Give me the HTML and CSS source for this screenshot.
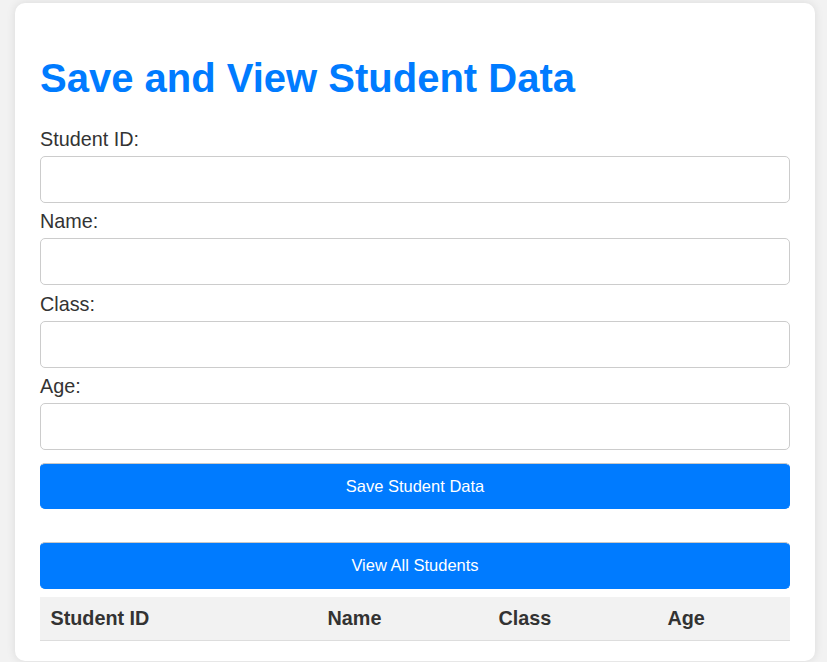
FILE: index.html
```html
<!DOCTYPE html>
<html lang="en">
<head>
<meta charset="utf-8">
<title>Save and View Student Data</title>
<link rel="stylesheet" href="styles.css">
</head>
<body>
<div class="card">
  <h1 class="title">Save and View Student Data</h1>
  <form class="form">
    <label class="label" for="sid">Student ID:</label>
    <input class="field" id="sid" type="text">
    <label class="label" for="name">Name:</label>
    <input class="field" id="name" type="text">
    <label class="label" for="cls">Class:</label>
    <input class="field" id="cls" type="text">
    <label class="label" for="age">Age:</label>
    <input class="field" id="age" type="text">
    <button class="btn btn-save" type="button">Save Student Data</button>
  </form>
  <button class="btn btn-view" type="button">View All Students</button>
  <table class="table">
    <thead>
      <tr>
        <th class="col-id">Student ID</th>
        <th class="col-name">Name</th>
        <th class="col-class">Class</th>
        <th class="col-age">Age</th>
      </tr>
    </thead>
    <tbody></tbody>
  </table>
</div>
</body>
</html>
```
FILE: styles.css
```css
* { box-sizing: border-box; }
html, body { height: 100%; }
body {
  margin: 0;
  padding: 3px 12px 0 15px;
  background: #f2f2f2;
  font-family: "Liberation Sans", Arial, sans-serif;
  color: #333;
  overflow: hidden;
}
.card {
  width: 800px;
  background: #fff;
  border-radius: 10px;
  box-shadow: 0 0 10px rgba(0, 0, 0, 0.1);
  padding: 25px 25px 20px;
}
.title {
  margin: 26.8px 0;
  font-size: 40px;
  line-height: 46px;
  font-weight: bold;
  color: #007bff;
}
.form { display: flex; flex-direction: column; margin: 0; }
.label {
  display: block;
  font-size: 19.8px;
  line-height: 23px;
  color: #333;
}
.field {
  display: block;
  width: 100%;
  height: 47px;
  margin: 5px 0 7.6px;
  padding: 10px;
  border: 1px solid #ccc;
  border-radius: 5px;
  font-size: 16px;
  font-family: inherit;
  background: #fff;
}
.btn {
  display: block;
  width: 100%;
  height: 46px;
  border: 1px solid #007bff;
  border-top-color: #c8c8c8;
  border-radius: 5px;
  background: #007bff;
  color: #fff;
  font-family: inherit;
  font-size: 16.5px;
  cursor: pointer;
}
.btn-save { margin-top: 5.5px; }
.btn-view { margin-top: 33px; height: 46.5px; }
.table {
  width: 100%;
  margin-top: 7.7px;
  border-collapse: collapse;
  table-layout: fixed;
}
.table th {
  text-align: left;
  background: #f2f2f2;
  color: #333;
  font-size: 19.8px;
  line-height: 23px;
  font-weight: bold;
  padding: 10px 10px 10px 10.5px;
  height: 44px;
  border-bottom: 1px solid #ddd;
}
.col-id { width: 277px; }
.col-name { width: 171px; }
.col-class { width: 169px; }
.col-age { width: 133px; }
```
